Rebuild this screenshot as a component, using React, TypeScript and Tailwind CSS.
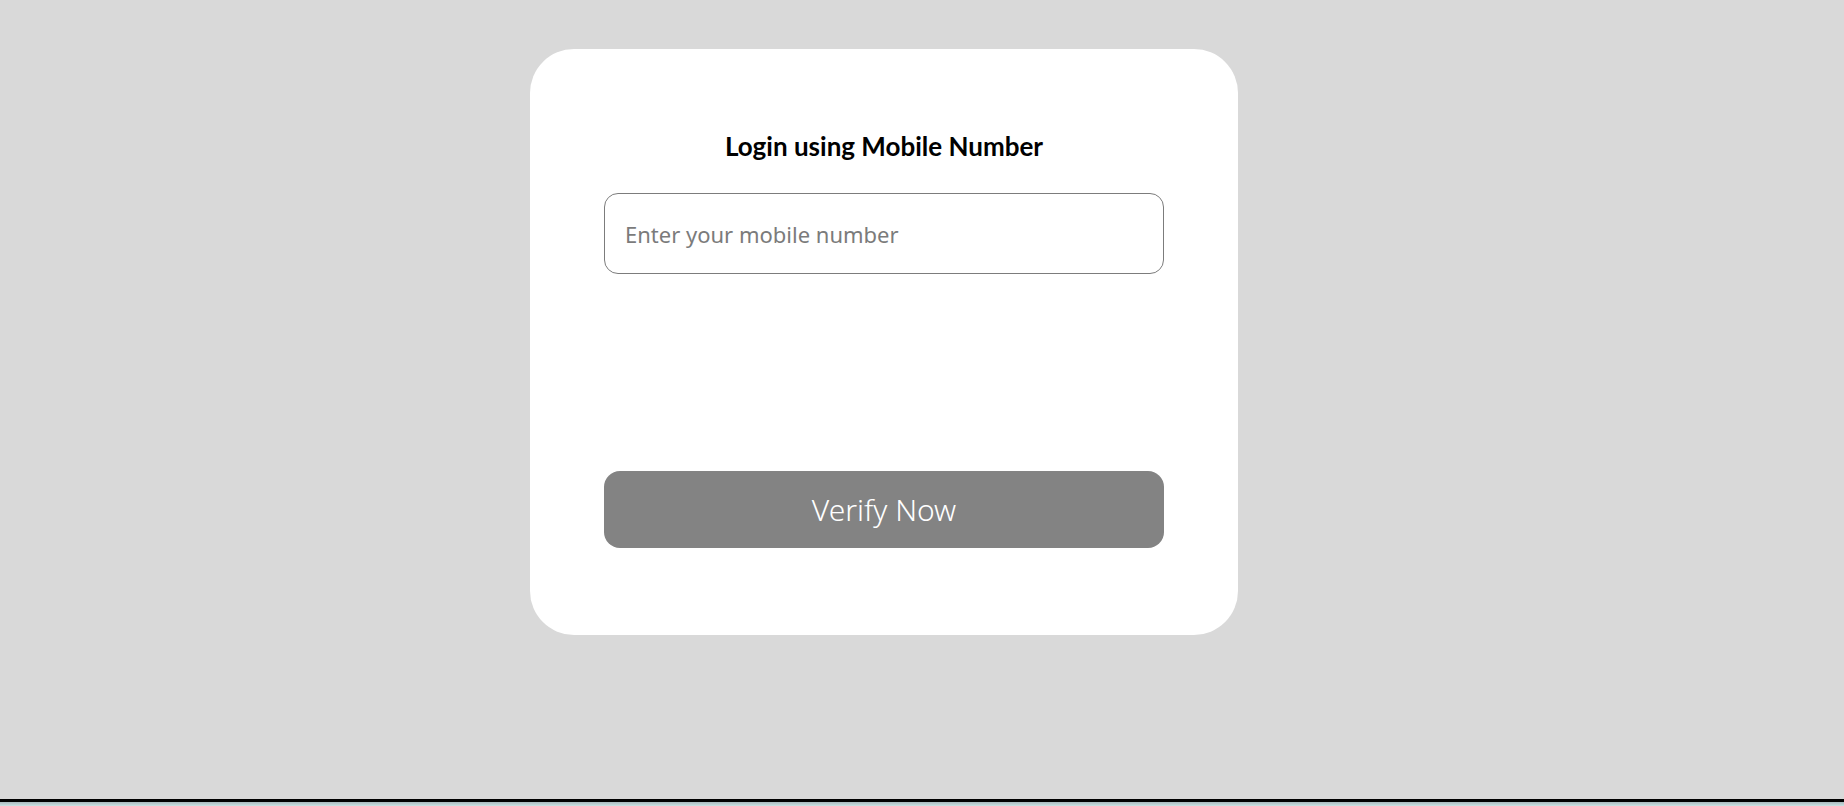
export default function App() {
  return (
    <div className="h-[806px] w-full flex flex-col bg-[#d9d9d9]">
      <div className="flex-1 pt-[49px] pl-[530px]">
        {/* Login card */}
        <div className="w-[708px] h-[586px] bg-white rounded-[44px] px-[74px] pt-[80px] flex flex-col">
          <h1 className="text-center text-[26px] leading-[34px] font-bold text-black font-['Lato',sans-serif]">
            Login using Mobile Number
          </h1>
          <input
            type="tel"
            placeholder="Enter your mobile number"
            className="mt-[30px] h-[81px] w-full rounded-[14px] border border-[#7c7c7c] px-[20px] text-[22px] font-['Noto_Sans',sans-serif] text-black placeholder:text-[#7b7b7b] outline-none"
          />
          <button className="mt-[197px] h-[77px] w-full rounded-[16px] bg-[#838383] text-white text-[30px] font-light font-['Noto_Sans',sans-serif]">
            Verify Now
          </button>
        </div>
      </div>
      <div className="h-[3px] bg-black" />
      <div className="h-[4px] bg-gradient-to-b from-[#a9b9bd] to-[#c9e2e3]" />
    </div>
  );
}
